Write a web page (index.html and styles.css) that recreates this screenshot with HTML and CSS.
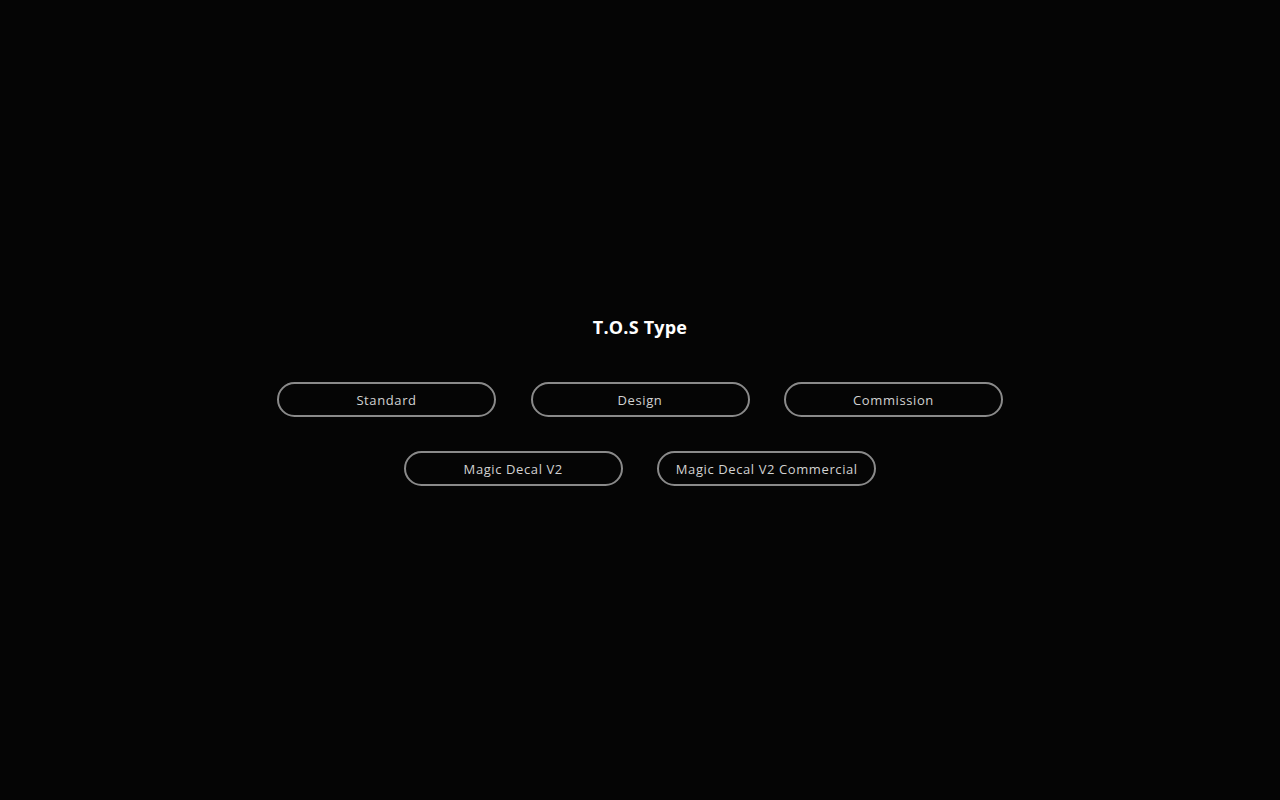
FILE: index.html
```html
<!DOCTYPE html>
<html lang="en">
<head>
<meta charset="utf-8">
<title>T.O.S Type</title>
<link rel="stylesheet" href="styles.css">
</head>
<body>
<main class="page">
  <h1 class="title">T.O.S Type</h1>
  <div class="options">
    <button class="option">Standard</button>
    <button class="option">Design</button>
    <button class="option">Commission</button>
    <button class="option">Magic Decal V2</button>
    <button class="option">Magic Decal V2 Commercial</button>
  </div>
</main>
</body>
</html>
```
FILE: styles.css
```css
html, body {
  margin: 0;
  padding: 0;
  background: #050505;
}
body {
  font-family: "Open Sans", "Liberation Sans", sans-serif;
  color: #ffffff;
}
.page {
  height: 800px;
  box-sizing: border-box;
  padding-top: 316px;
  display: flex;
  flex-direction: column;
  align-items: center;
}
.title {
  margin: 0;
  font-size: 18px;
  line-height: 22px;
  font-weight: 700;
  letter-spacing: 0.2px;
  color: #ffffff;
}
.options {
  margin-top: 44px;
  width: 726px;
  display: flex;
  flex-wrap: wrap;
  justify-content: center;
  gap: 34px 34.5px;
}
.option {
  width: 219px;
  height: 35px;
  box-sizing: border-box;
  border: 2px solid #8a8a8a;
  border-radius: 18px;
  background: transparent;
  color: #d2d2d2;
  font-family: "Open Sans", "Liberation Sans", sans-serif;
  font-size: 13px;
  letter-spacing: 0.6px;
  padding: 0;
  cursor: pointer;
}
```
